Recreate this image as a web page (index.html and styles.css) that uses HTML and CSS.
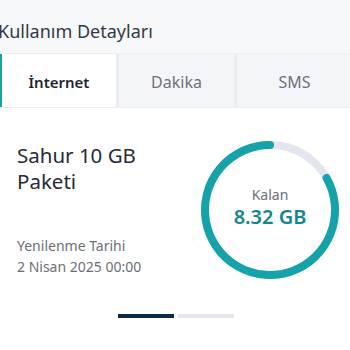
FILE: index.html
```html
<!DOCTYPE html>
<html lang="tr">
<head>
<meta charset="utf-8">
<link rel="stylesheet" href="styles.css">
</head>
<body>
<div class="page">
  <header class="header">
    <h1 class="title">Kullanım Detayları</h1>
  </header>
  <nav class="tabs">
    <div class="tab tab-active">İnternet</div>
    <div class="tab">Dakika</div>
    <div class="tab">SMS</div>
  </nav>
  <section class="card">
    <div class="info">
      <div class="pkg">Sahur 10 GB<br>Paketi</div>
      <div class="renew">
        <div>Yenilenme Tarihi</div>
        <div>2 Nisan 2025 00:00</div>
      </div>
    </div>
    <div class="gauge">
      <svg width="140" height="140" viewBox="0 0 140 140">
        <circle cx="70" cy="70" r="65" fill="none" stroke="#e4e6ee" stroke-width="8"/>
        <path d="M 126.57 37.99 A 65 65 0 1 1 70 5" fill="none" stroke="#16a2a9" stroke-width="8" stroke-linecap="round"/>
      </svg>
      <div class="gauge-text">
        <div class="gauge-label">Kalan</div>
        <div class="gauge-value">8.32 GB</div>
      </div>
    </div>
  </section>
  <div class="pager">
    <span class="bar bar-on"></span>
    <span class="bar"></span>
  </div>
</div>
</body>
</html>
```
FILE: styles.css
```css
html, body {
  margin: 0;
  padding: 0;
  background: #ffffff;
}
.page {
  width: 350px;
  height: 350px;
  overflow: hidden;
  font-family: "Noto Sans", "Open Sans", sans-serif;
  background: #ffffff;
}
.header {
  height: 53px;
  background: #f7f8fa;
  display: flex;
  align-items: flex-start;
}
.title {
  margin: 19px 0 0 -2px;
  font-size: 18px;
  line-height: 24px;
  font-weight: 400;
  color: #333a46;
}
.tabs {
  display: grid;
  grid-template-columns: 116px 115px 115px;
  column-gap: 3px;
  height: 53px;
  background: #eaecf0;
  border-top: 1px solid #eceef2;
  border-bottom: 1px solid #eceef2;
}
.tab {
  display: flex;
  align-items: center;
  justify-content: center;
  padding-top: 2px;
  background: #f4f5f8;
  font-size: 16px;
  color: #6c707a;
}
.tab-active {
  background: #ffffff;
  border-left: 2px solid #16a2a9;
  color: #1f2430;
  font-size: 15px;
  font-weight: 600;
}
.card {
  display: flex;
  justify-content: space-between;
  align-items: flex-start;
  padding: 32px 10px 0 17px;
  height: 174px;
}
.info {
  display: flex;
  flex-direction: column;
  gap: 41px;
  padding-top: 2px;
}
.pkg {
  font-size: 20.5px;
  line-height: 26px;
  color: #252b38;
}
.renew {
  font-size: 14px;
  line-height: 21px;
  color: #6b6f78;
}
.gauge {
  position: relative;
  width: 140px;
  height: 140px;
}
.gauge svg {
  display: block;
}
.gauge-text {
  position: absolute;
  inset: 0;
  display: flex;
  flex-direction: column;
  align-items: center;
  justify-content: center;
  padding-bottom: 6px;
  box-sizing: border-box;
}
.gauge-label {
  font-size: 14px;
  line-height: 20px;
  color: #6b6f78;
}
.gauge-value {
  font-size: 20px;
  line-height: 24px;
  font-weight: 600;
  color: #13868e;
}
.pager {
  display: flex;
  justify-content: center;
  gap: 4px;
  padding-left: 2px;
}
.bar {
  width: 56px;
  height: 4px;
  background: #e5e7ee;
}
.bar-on {
  background: #0d2a4a;
}
```
